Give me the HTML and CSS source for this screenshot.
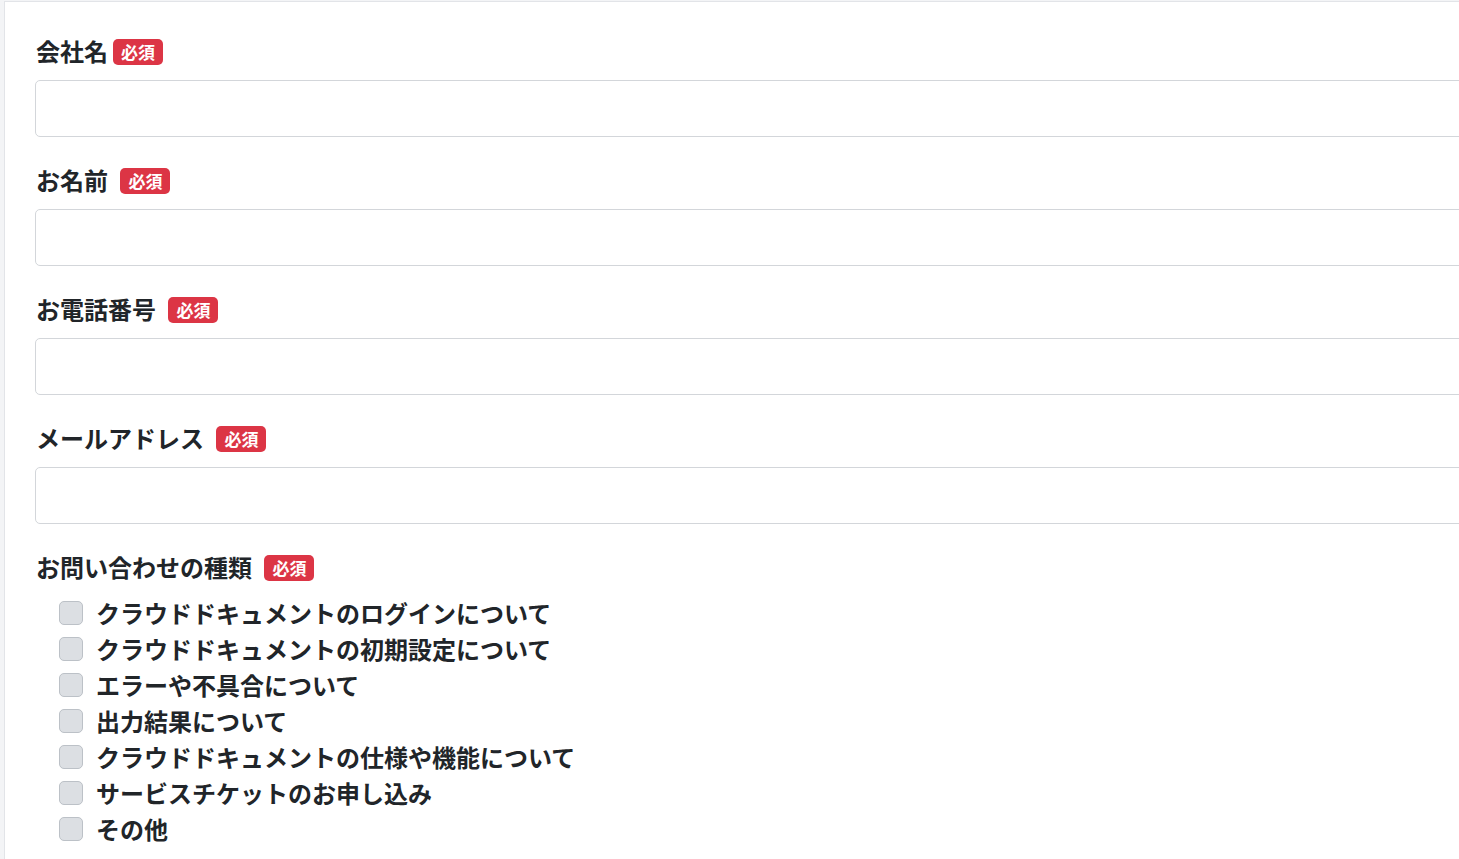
FILE: index.html
```html
<!DOCTYPE html>
<html lang="ja">
<head>
  <meta charset="UTF-8">
  <meta name="viewport" content="width=device-width, initial-scale=1.0">
  <title>お問い合わせ</title>
  <link rel="stylesheet" href="styles.css">
</head>
<body>
  <div class="card">
    <form class="contact-form">
      <div class="field">
        <label for="company">会社名<span class="badge">必須</span></label>
        <input type="text" id="company">
      </div>
      <div class="field">
        <label for="name">お名前 <span class="badge">必須</span></label>
        <input type="text" id="name">
      </div>
      <div class="field">
        <label for="tel">お電話番号 <span class="badge">必須</span></label>
        <input type="tel" id="tel">
      </div>
      <div class="field">
        <label for="email">メールアドレス <span class="badge">必須</span></label>
        <input type="email" id="email">
      </div>
      <div class="field">
        <label>お問い合わせの種類 <span class="badge">必須</span></label>
        <div class="checks">
          <label class="check"><input type="checkbox"><span>クラウドドキュメントのログインについて</span></label>
          <label class="check"><input type="checkbox"><span>クラウドドキュメントの初期設定について</span></label>
          <label class="check"><input type="checkbox"><span>エラーや不具合について</span></label>
          <label class="check"><input type="checkbox"><span>出力結果について</span></label>
          <label class="check"><input type="checkbox"><span>クラウドドキュメントの仕様や機能について</span></label>
          <label class="check"><input type="checkbox"><span>サービスチケットのお申し込み</span></label>
          <label class="check"><input type="checkbox"><span>その他</span></label>
        </div>
      </div>
    </form>
  </div>
</body>
</html>
```

FILE: styles.css
```css
html, body { margin: 0; height: 100%; overflow: hidden; }
body { background: #f3f4f6; font-family: "Noto Sans CJK JP", "Noto Sans", sans-serif; color: #212529; }
.card { margin: 1px 0 0 4px; min-height: 100%; width: 1500px; background: #fff; border-top: 1px solid #e2e4e8; border-left: 1px solid #e2e4e8; padding: 31px 0 0 30px; box-sizing: border-box; }
.contact-form { width: 1440px; }
.field { margin-bottom: 25px; }
.field > label { display: block; font-size: 24px; font-weight: bold; line-height: 36px; margin: 0 0 11px 1px; word-spacing: 2px; }
.badge { display: inline-block; margin-left: 5px; padding: 0 8px; height: 26px; line-height: 26px; font-size: 17px; font-weight: bold; color: #fff; background: #dc3545; border-radius: 5px; vertical-align: 2px; }
.field > input { display: block; width: 100%; height: 57px; box-sizing: border-box; border: 1px solid #d3d6da; border-radius: 5px; padding: 8px 16px; font-size: 20px; }
.checks { padding-left: 24px; margin-top: -1px; }
.check { display: flex; align-items: center; font-size: 24px; font-weight: bold; line-height: 36px; }
.check input { appearance: none; width: 24px; height: 24px; margin: 0 13px 0 0; background: #dcdfe3; border: 1px solid #bcc1c7; border-radius: 5px; }
```
